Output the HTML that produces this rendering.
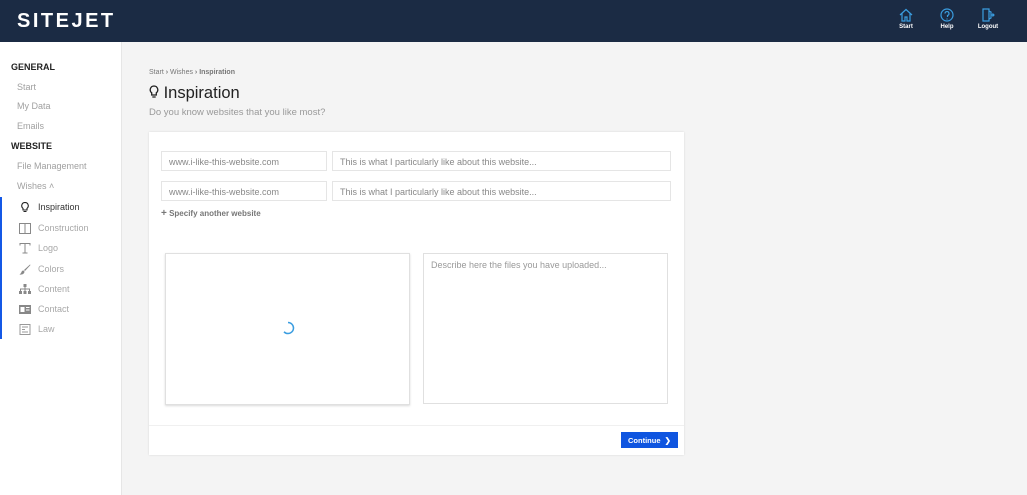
<!DOCTYPE html>
<html><head><meta charset="utf-8"><style>
*{box-sizing:border-box;margin:0;padding:0}
body{width:1027px;height:495px;overflow:hidden;background:#f4f4f4;font-family:"Liberation Sans",sans-serif;position:relative}
.hdr{position:absolute;left:0;top:0;width:1027px;height:42px;background:#1b2b44}
.logo{position:absolute;left:17px;top:10px;color:#fff;font-size:20px;font-weight:bold;letter-spacing:2.5px}
.nav{position:absolute;top:8px;width:40px;text-align:center;color:#fff;font-size:6px;font-weight:bold}
.nav svg{display:block;margin:0 auto 2px}
.side{position:absolute;left:0;top:42px;width:122px;height:453px;background:#fff;border-right:1px solid #e6e6e6}
.sh{position:absolute;left:11px;font-size:9px;font-weight:bold;color:#222}
.si{position:absolute;left:17px;font-size:9px;color:#a0a0a0}
.sub{position:absolute;left:38px;font-size:9px;color:#a8a8a8}
.ic{position:absolute;left:19px;width:12px;height:11px}
.bar{position:absolute;left:0;top:155px;width:2px;height:142px;background:#1458e6}
.crumb{position:absolute;left:149px;top:69px;font-size:7px;color:#777}
.title{position:absolute;left:149px;top:84px;font-size:16.5px;color:#222}
.subt{position:absolute;left:149px;top:107px;font-size:9.5px;color:#999}
.card{position:absolute;left:149px;top:132px;width:535px;height:323px;background:#fff;box-shadow:0 0 2px rgba(0,0,0,.12)}
.in{position:absolute;height:20px;border:1px solid #e5e5e5;font-size:9px;color:#888;padding:5px 7px;white-space:nowrap;overflow:hidden}
.btn{position:absolute;left:472px;top:300px;width:57px;height:16px;background:#0f55e0;color:#fff;font-size:7.5px;font-weight:bold;padding:4px 0 0 7px}
</style></head><body>
<div class="hdr"><div class="logo">SITEJET</div>
<div class="nav" style="left:886px"><svg width="14" height="14" viewBox="0 0 14 14" fill="none" stroke="#3a9de0" stroke-width="1.2"><path d="M1 7L7 1.5 13 7M3 5.5V13H6V9H8V13H11V5.5"/></svg>Start</div>
<div class="nav" style="left:927px"><svg width="14" height="14" viewBox="0 0 14 14" fill="none" stroke="#3a9de0" stroke-width="1.2"><circle cx="7" cy="7" r="6"/><path d="M5 5.5a2 2 0 1 1 2.5 2V9M7 10.5v1"/></svg>Help</div>
<div class="nav" style="left:968px"><svg width="14" height="14" viewBox="0 0 14 14" fill="none" stroke="#3a9de0" stroke-width="1.2"><path d="M2 1h6v12H2zM8 3l2 1v6l-2 1M10 7h3M11.5 5.5L13 7l-1.5 1.5"/></svg>Logout</div>
</div>
<div class="side">
<div class="sh" style="top:20px">GENERAL</div>
<div class="si" style="top:40px">Start</div>
<div class="si" style="top:59px">My Data</div>
<div class="si" style="top:79px">Emails</div>
<div class="sh" style="top:99px">WEBSITE</div>
<div class="si" style="top:119px">File Management</div>
<div class="si" style="top:139px">Wishes &#x2c4;</div>
<div class="bar"></div>
<svg class="ic" style="top:160px" viewBox="0 0 12 11" fill="none" stroke="#222" stroke-width="1.1"><path d="M6 .5a3.3 3.3 0 0 0-2 5.9V8h4V6.4A3.3 3.3 0 0 0 6 .5zM4.5 9.5h3"/></svg>
<div class="sub" style="top:160px;color:#333">Inspiration</div>
<svg class="ic" style="top:181px" viewBox="0 0 12 11" fill="none" stroke="#888" stroke-width="1"><rect x=".5" y=".5" width="11" height="10"/><path d="M6 .5v10"/></svg>
<div class="sub" style="top:181px">Construction</div>
<svg class="ic" style="top:201px" viewBox="0 0 12 11" fill="none" stroke="#888" stroke-width="1"><path d="M1 2.5V.5h10v2M6 .5v9.5M3.5 10h5"/></svg>
<div class="sub" style="top:201px">Logo</div>
<svg class="ic" style="top:222px" viewBox="0 0 12 11"><path d="M11 .5L5 6l1 1 5.5-6zM4.5 6.5C2 6.5 3 9 .5 10.5c3 .5 5-1 5-3z" fill="#888"/></svg>
<div class="sub" style="top:222px">Colors</div>
<svg class="ic" style="top:242px" viewBox="0 0 12 11" fill="#888"><rect x="4.5" y="0" width="3" height="3"/><rect x="0" y="7" width="3" height="3"/><rect x="4.5" y="7" width="3" height="3"/><rect x="9" y="7" width="3" height="3"/><path d="M6 3v4M1.5 7V5h9v2" stroke="#888" fill="none"/></svg>
<div class="sub" style="top:242px">Content</div>
<svg class="ic" style="top:262px" viewBox="0 0 12 11" fill="#888"><rect x="0" y="1" width="12" height="9"/><rect x="1.5" y="3" width="4" height="5" fill="#fff"/><rect x="7" y="3" width="3.5" height="1" fill="#fff"/><rect x="7" y="5.5" width="3.5" height="1" fill="#fff"/></svg>
<div class="sub" style="top:262px">Contact</div>
<svg class="ic" style="top:282px" viewBox="0 0 12 11" fill="none" stroke="#999" stroke-width="1"><rect x="1" y=".5" width="10" height="10"/><path d="M3 3h6M3 5.5h3M3 8h6"/></svg>
<div class="sub" style="top:282px">Law</div>
</div>
<div class="crumb">Start <b>&#x203A;</b> Wishes <b>&#x203A; Inspiration</b></div>
<div class="title"><svg width="10" height="14" viewBox="0 0 10 14" fill="none" stroke="#222" stroke-width="1.3" style="vertical-align:-1px"><path d="M5 1a3.8 3.8 0 0 0-2.3 6.8V10h4.6V7.8A3.8 3.8 0 0 0 5 1zM3.3 12h3.4"/></svg> Inspiration</div>
<div class="subt">Do you know websites that you like most?</div>
<div class="card">
<div class="in" style="left:12px;top:19px;width:166px">www.i-like-this-website.com</div>
<div class="in" style="left:183px;top:19px;width:339px">This is what I particularly like about this website...</div>
<div class="in" style="left:12px;top:49px;width:166px">www.i-like-this-website.com</div>
<div class="in" style="left:183px;top:49px;width:339px">This is what I particularly like about this website...</div>
<div style="position:absolute;left:12px;top:76px;font-size:8px;color:#777;font-weight:bold"><span style="font-size:10px">+</span> Specify another website</div>
<div style="position:absolute;left:16px;top:121px;width:245px;height:152px;border:1px solid #e0e0e0;box-shadow:0 1px 2px rgba(0,0,0,.15)">
<svg style="position:absolute;left:115px;top:67px" width="14" height="14" viewBox="0 0 14 14" fill="none" stroke="#3a9de0" stroke-width="1.5"><path d="M7 1.5a5.5 5.5 0 0 1 0 11 5.5 5.5 0 0 1-4-1.7"/></svg></div>
<div style="position:absolute;left:274px;top:121px;width:245px;height:151px;border:1px solid #e0e0e0;font-size:9px;color:#999;padding:6px 7px">Describe here the files you have uploaded...</div>
<div style="position:absolute;left:0;top:293px;width:535px;border-top:1px solid #f0f0f0"></div>
<div class="btn">Continue &nbsp;&#x276F;</div>
</div>
</body></html>
